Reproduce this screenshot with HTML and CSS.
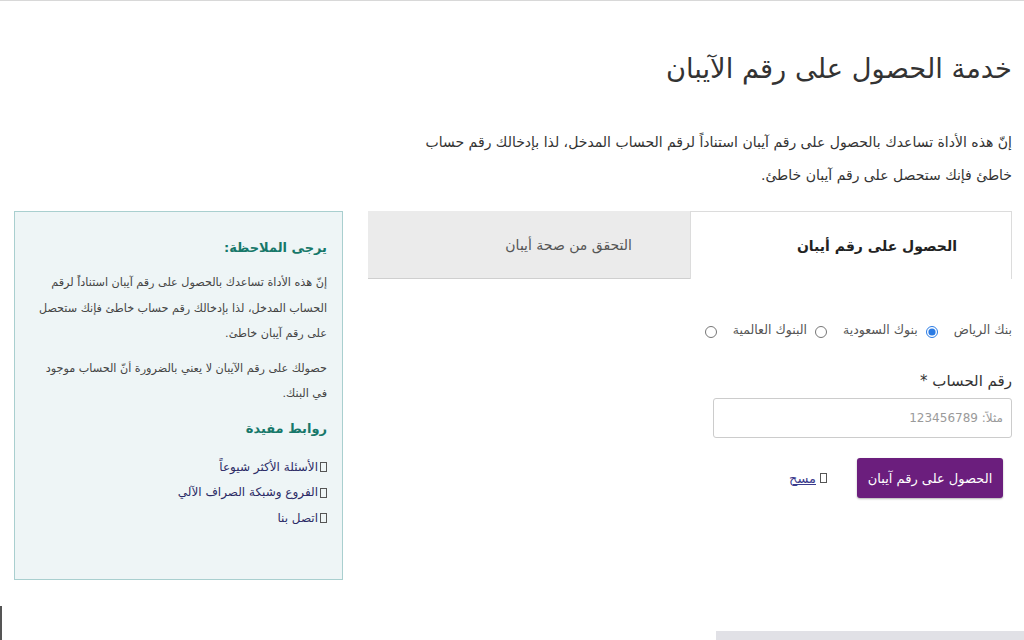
FILE: index.html
```html
<!DOCTYPE html>
<html lang="ar" dir="rtl">
<head>
<meta charset="utf-8">
<title>خدمة الحصول على رقم الآيبان</title>
<link rel="stylesheet" href="styles.css">
</head>
<body>
<div class="topline"></div>
<div class="page">
  <h1 class="title">خدمة الحصول على رقم الآيبان</h1>
  <p class="intro">إنّ هذه الأداة تساعدك بالحصول على رقم آيبان استناداً لرقم الحساب المدخل، لذا بإدخالك رقم حساب خاطئ فإنك ستحصل على رقم آيبان خاطئ.</p>
  <div class="layout">
    <main class="main">
      <div class="tabs">
        <div class="tab active">الحصول على رقم أيبان</div>
        <div class="tab">التحقق من صحة أيبان</div>
      </div>
      <div class="radios">
        <label class="radio"><span>بنك الرياض</span><input type="radio" name="bank" checked></label>
        <label class="radio"><span>بنوك السعودية</span><input type="radio" name="bank"></label>
        <label class="radio"><span>البنوك العالمية</span><input type="radio" name="bank"></label>
      </div>
      <div class="field">
        <div class="label">رقم الحساب *</div>
        <input class="input" type="text" placeholder="مثلاً: 123456789">
      </div>
      <div class="actions">
        <button class="btn">الحصول على رقم آيبان</button>
        <a class="clear" href="#"><span class="box"></span>مسح</a>
      </div>
    </main>
    <aside class="note">
      <h3 class="note-title">يرجى الملاحظة:</h3>
      <p class="note-text">إنّ هذه الأداة تساعدك بالحصول على رقم آيبان استناداً لرقم الحساب المدخل، لذا بإدخالك رقم حساب خاطئ فإنك ستحصل على رقم آيبان خاطئ.</p>
      <p class="note-text">حصولك على رقم الآيبان لا يعني بالضرورة أنّ الحساب موجود في البنك.</p>
      <h3 class="note-title links-title">روابط مفيدة</h3>
      <ul class="links">
        <li><span class="box"></span>الأسئلة الأكثر شيوعاً</li>
        <li><span class="box"></span>الفروع وشبكة الصراف الآلي</li>
        <li><span class="box"></span>اتصل بنا</li>
      </ul>
    </aside>
  </div>
  <div class="bottom">
    <div class="bottom-bar"></div>
  </div>
</div>
<div class="leftmark"></div>
</body>
</html>
```
FILE: styles.css
```css
html, body {
  margin: 0;
  padding: 0;
  background: #ffffff;
}
body {
  direction: rtl;
  font-family: "DejaVu Sans", "Noto Sans", sans-serif;
  color: #333;
  width: 1024px;
  height: 640px;
  overflow: hidden;
  position: relative;
}
.topline {
  height: 1px;
  background: #d8d8d8;
}
.page {
  padding: 0 12px 0 14px;
}
.title {
  margin: 40px 0 0 0;
  font-size: 27.3px;
  font-weight: normal;
  color: #333;
  line-height: 56px;
}
.intro {
  margin: 29px 0 0 0;
  max-width: 612px;
  font-size: 14px;
  line-height: 33px;
  color: #333;
}
.layout {
  display: flex;
  gap: 24px;
  margin-top: 19px;
  align-items: flex-start;
}
.main {
  width: 645px;
}
.tabs {
  display: flex;
  height: 68px;
}
.tab {
  width: 322px;
  box-sizing: border-box;
  padding-right: 58px;
  display: flex;
  align-items: center;
  font-size: 14px;
  color: #555;
  background: #ebebeb;
  border-bottom: 1px solid #cfcfcf;
}
.tab.active {
  background: #fff;
  font-weight: bold;
  color: #222;
  border: 1px solid #dcdcdc;
  border-bottom: none;
  padding-right: 54px;
}
.radios {
  display: flex;
  gap: 8px;
  margin-top: 38px;
  height: 24px;
  align-items: center;
}
.radio {
  display: flex;
  align-items: center;
  gap: 16px;
  font-size: 12.5px;
  color: #555;
}
.radio input {
  margin: 6px 0 0 0;
  width: 12px;
  height: 12px;
  accent-color: #2a7be4;
}
.field {
  margin-top: 30px;
}
.label {
  font-size: 15px;
  color: #333;
  line-height: 20px;
}
.input {
  display: block;
  margin-top: 7px;
  margin-right: 0;
  width: 299px;
  height: 40px;
  box-sizing: border-box;
  border: 1px solid #cccccc;
  border-radius: 3px;
  padding: 0 8px;
  font-family: "DejaVu Sans", sans-serif;
  font-size: 12px;
  direction: rtl;
}
.input::placeholder {
  color: #9a9a9a;
}
.actions {
  display: flex;
  align-items: center;
  margin-top: 20px;
  padding-right: 9px;
  gap: 30px;
}
.btn {
  width: 146px;
  height: 40px;
  background: #6b1e7d;
  color: #fff;
  border: none;
  border-radius: 3px;
  font-family: "DejaVu Sans", sans-serif;
  font-size: 13px;
  box-shadow: 0 1px 2px rgba(0,0,0,0.3);
}
.clear {
  color: #3a3a8c;
  font-size: 13px;
  text-decoration: underline;
  display: flex;
  align-items: center;
  gap: 2px;
}
.box {
  display: inline-block;
  width: 5px;
  height: 8px;
  border: 1px solid #555;
  margin-left: 2px;
}
.note {
  width: 329px;
  height: 369px;
  box-sizing: border-box;
  background: #eef5f6;
  border: 1px solid #a9cfcf;
  padding: 26px 15px 0 14px;
}
.note-title {
  margin: 0;
  font-size: 13px;
  font-weight: bold;
  color: #17786a;
  line-height: 20px;
}
.note-text {
  margin: 12px 0 0 0;
  font-size: 11.2px;
  line-height: 25.5px;
  color: #444;
}
.note-text + .note-text {
  margin-top: 9px;
}
.links-title {
  margin-top: 12px;
}
.links {
  list-style: none;
  margin: 16px 0 0 0;
  padding: 0;
  font-size: 12px;
  color: #2c2c66;
}
.links li {
  line-height: 25.5px;
  display: flex;
  align-items: center;
}
.bottom {
  display: flex;
  justify-content: flex-start;
  margin-top: 51px;
  margin-left: -14px;
  margin-right: -12px;
}
.bottom-bar {
  width: 308px;
  height: 10px;
  background: #e1e1e6;
}
.leftmark {
  position: absolute;
  left: 0;
  top: 606px;
  width: 2px;
  height: 34px;
  background: #555;
}
```
